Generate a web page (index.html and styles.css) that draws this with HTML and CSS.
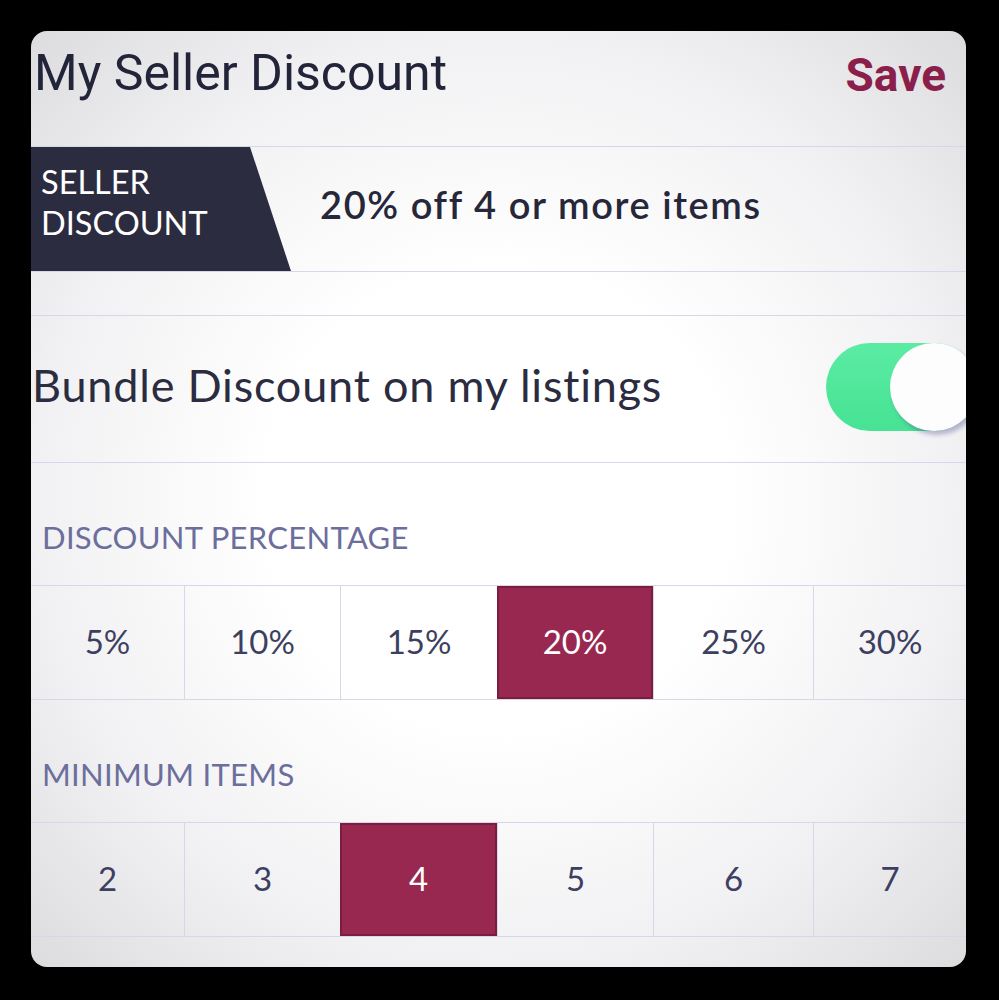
FILE: index.html
```html
<!DOCTYPE html>
<html lang="en">
<head>
  <meta charset="UTF-8" />
  <meta name="viewport" content="width=device-width, initial-scale=1.0" />
  <title>My Seller Discount</title>
  <link rel="stylesheet" href="styles.css">
</head>
<body>
  <div class="card">
    <header class="top">
      <h1>My Seller Discount</h1>
      <button class="save">Save</button>
    </header>

    <div class="seller">
      <div class="badge">SELLER<br>DISCOUNT</div>
      <div class="summary">20% off 4 or more items</div>
    </div>

    <div class="bundle">
      <span>Bundle Discount on my listings</span>
      <div class="toggle"><div class="knob"></div></div>
    </div>

    <div class="label">DISCOUNT PERCENTAGE</div>
    <div class="options">
      <div class="opt">5%</div>
      <div class="opt">10%</div>
      <div class="opt">15%</div>
      <div class="opt active">20%</div>
      <div class="opt">25%</div>
      <div class="opt">30%</div>
    </div>

    <div class="label">MINIMUM ITEMS</div>
    <div class="options">
      <div class="opt">2</div>
      <div class="opt">3</div>
      <div class="opt active">4</div>
      <div class="opt">5</div>
      <div class="opt">6</div>
      <div class="opt">7</div>
    </div>
  </div>
</body>
</html>
```

FILE: styles.css
```css
body {
  margin: 0;
  padding: 31px 33px 32px 31px;
  background: #000;
  font-family: 'Lato', sans-serif;
}
.card {
  height: 936px;
  border-radius: 16px;
  overflow: hidden;
  background: radial-gradient(ellipse at 50% 50%, #ffffff 35%, #f1f1f3 70%, #dcdcde 100%);
}
.top {
  height: 116px;
  display: flex;
  justify-content: space-between;
  align-items: flex-start;
  border-bottom: 1px solid #d7d7ea;
  box-sizing: border-box;
}
.top h1 {
  margin: 13px 0 0 3px;
  font-family: 'Roboto', sans-serif;
  font-weight: 400;
  font-size: 50px;
  color: #22243a;
}
.save {
  margin: 17px 20px 0 0;
  padding: 0;
  border: none;
  background: none;
  font-family: 'Roboto', sans-serif;
  font-weight: 700;
  font-size: 46px;
  color: #8a1f4b;
}
.seller {
  height: 125px;
  display: flex;
  align-items: center;
  border-bottom: 1px solid #d7d7ea;
  box-sizing: border-box;
}
.badge {
  width: 260px;
  height: 124px;
  box-sizing: border-box;
  padding: 14px 0 0 10px;
  background: #2b2c3f;
  clip-path: polygon(0 0, 219px 0, 260px 100%, 0 100%);
  color: #fff;
  font-size: 32.5px;
  line-height: 41px;
}
.summary {
  margin: 0 0 10px 29px;
  font-size: 38px;
  font-weight: 600;
  color: #262739;
  letter-spacing: 1.6px;
}
.bundle {
  margin-top: 43px;
  height: 148px;
  display: flex;
  align-items: center;
  justify-content: space-between;
  border-top: 1px solid #d7d7ea;
  border-bottom: 1px solid #d7d7ea;
  box-sizing: border-box;
  font-size: 45px;
  color: #2b2c3f;
  letter-spacing: 0.8px;
}
.bundle span {
  margin: 0 0 9px 1px;
}
.toggle {
  width: 152px;
  height: 88px;
  margin: 0 -12px 4px 0;
  border-radius: 44px;
  background: linear-gradient(#5aeca3, #47e294);
  display: flex;
  justify-content: flex-end;
}
.knob {
  width: 88px;
  height: 88px;
  border-radius: 50%;
  background: #fdfdfe;
  box-shadow: 3px 4px 4px rgba(70, 70, 140, 0.35);
}
.label {
  height: 122px;
  box-sizing: border-box;
  padding: 55px 0 0 11px;
  font-size: 31px;
  color: #6c6e9c;
  letter-spacing: 0.3px;
}
.options {
  display: grid;
  grid-template-columns: 153px 156px 157px 156px 160px 1fr;
  height: 115px;
  border-top: 1px solid #d7d7ea;
  border-bottom: 1px solid #d7d7ea;
  box-sizing: border-box;
}
.opt {
  display: flex;
  align-items: center;
  justify-content: center;
  border-left: 1px solid #d7d7ea;
  font-size: 33px;
  color: #3d3f60;
  padding-bottom: 4px;
}
.opt:first-child {
  border-left: none;
}
.opt.active {
  background: #98284f;
  border: 2px solid #7c1d40;
  color: #fff;
}
```
